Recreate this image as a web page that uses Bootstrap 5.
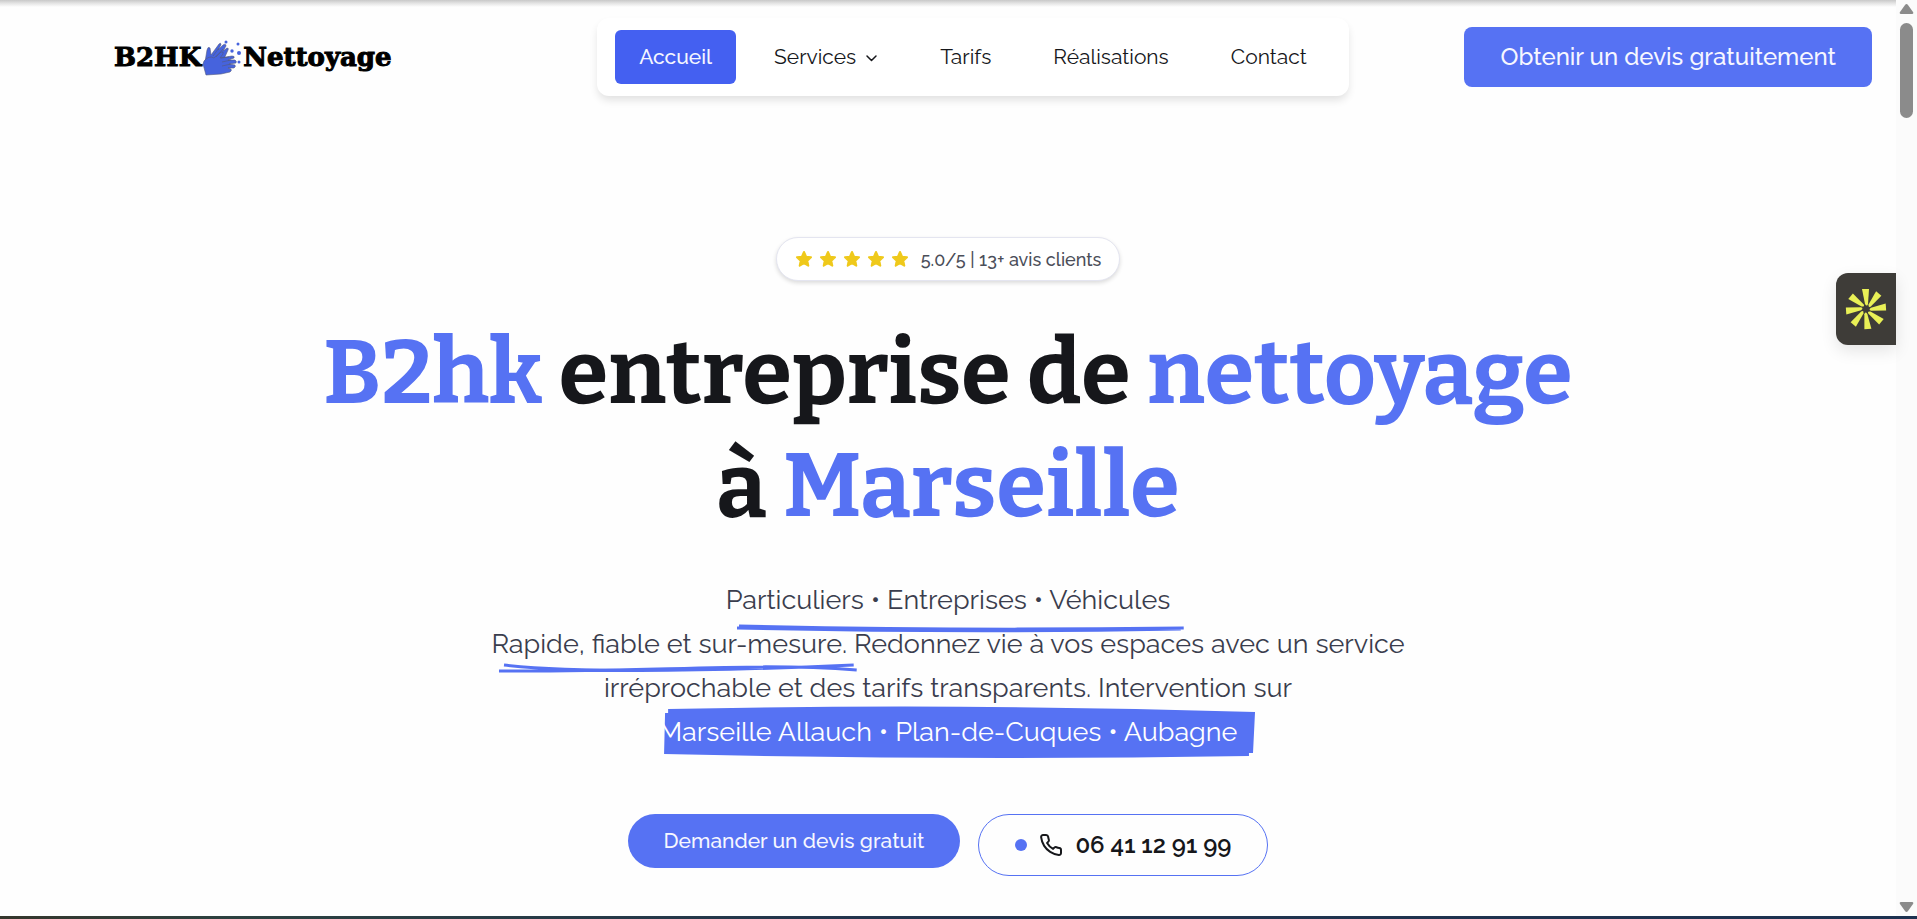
<!DOCTYPE html>
<html lang="fr">
<head>
<meta charset="utf-8">
<meta name="viewport" content="width=device-width, initial-scale=1">
<title>B2HK Nettoyage</title>
<link href="https://cdn.jsdelivr.net/npm/bootstrap@5.3.0/dist/css/bootstrap.min.css" rel="stylesheet">
<style>
:root{--blue:#5672f3;--ink:#16171b}
body{font-family:"Raleway","Lato",sans-serif;color:var(--ink);background:#fefefe}
.page-top{background:linear-gradient(#c8c8c8,#e2e2e2 3px,#fefefe 7px)}
.site-header{padding:18px 24px 0}
.brand{padding:0 90px;font-family:"DejaVu Serif",serif;font-weight:700;font-size:26px;line-height:30px;color:#000;text-decoration:none;-webkit-text-stroke:1px #000}
.menu{padding:12px 18px;border-radius:12px;background:#fff;box-shadow:0 5px 8px -1px #0000001f;gap:14px}
.menu .nav-link{font-size:21px;line-height:30px;padding:12px 24px;color:var(--ink);border-radius:6px}
.menu .nav-link.active{background:#4460f1;color:#f4f6ff;font-weight:500}
.btn-quote{background:var(--blue);color:#f6f7ff;font-size:24px;line-height:36px;padding:12px 36px;border:0;border-radius:8px;font-weight:500}
.rating{margin-top:141px;height:44px;padding:0 18px;border:1px solid #e4e5f0;border-radius:22px;background:#fff;box-shadow:0 2px 4px #00000024;font-size:18px;font-weight:500;color:#4b4e59;gap:12px}
.headline{font-family:"Bitter","DejaVu Serif",serif;font-weight:700;font-size:90px;line-height:113px;margin:36px 0 0}
.accent{color:var(--blue)}
.pitch{font-size:27px;line-height:44px;font-weight:400;color:#3a3d4d;margin:35px 0 0}
.mark-line{position:relative;display:inline-block}
.mark-line svg{position:absolute;left:0;top:0;width:100%;height:100%;overflow:visible}
.mark-line span{position:relative}
.inked{color:#fff}
.actions{gap:18px;margin-top:60px}
.btn-main{background:var(--blue);color:#f6f7ff;font-size:21px;line-height:30px;padding:12px 36px;border:0;border-radius:30px;font-weight:500}
.btn-phone{border:1px solid var(--blue);border-radius:32px;font-size:24px;line-height:36px;font-weight:600;padding:12px 36px;gap:12px;color:var(--ink)}
.dot{width:12px;height:12px;border-radius:50%;background:var(--blue)}
.side-tab{position:absolute;right:0;top:273px;width:60px;height:72px;background:#3e3c38;border:0;border-radius:12px 0 0 12px;box-shadow:0 6px 16px #0000001a}
.rail{width:21px;background:#fbfbfb}
.thumb{width:13px;height:95px;border-radius:7px;background:#8b8b8b}
.strip{height:3px;background:linear-gradient(90deg,#35362c,#2c4140 12%,#22344d 45%,#1c3150)}
</style>
</head>
<body>
<div class="d-flex flex-column min-vh-100">
<div class="page-top d-flex flex-grow-1">
<main class="flex-grow-1 position-relative">
  <header class="site-header d-flex align-items-center justify-content-between">
    <a class="brand d-flex align-items-center" href="#"><span>B2HK</span>
      <svg width="42" height="40" viewBox="0 0 42 40" aria-hidden="true"><g fill="#4663dd" stroke="#53597e" stroke-width=".6" stroke-linejoin="round"><path d="M4 25 6 13Q7 9 9 11L10 18 18 7Q20 5 20 8L17 13 22 8Q25 6 25 9L22 14 26 11Q28 11 27 13L23 22 12 33 3 29Z"/><path d="M3 24Q8 18 13 21L20 15Q23 14 22 17L19 21 31 19Q34 19 33 21L27 23 34 23Q36 24 35 26L28 27 34 28Q35 30 33 31L27 31 30 32Q31 34 29 35L20 37 5 38 2 27Z"/></g><path d="m12 19 6-8M15 20l7-8M20 21l8-1M21 25l9-2M21 29l9-2" fill="none" stroke="#53597e" stroke-width=".6"/><g fill="#4663dd"><circle cx="25" cy="5" r="1.500"/><circle cx="37" cy="7" r="1.500"/><circle cx="31" cy="14" r="1.700"/><circle cx="38" cy="16" r="2"/><circle cx="38" cy="25" r="1.500"/></g></svg>
      <span>Nettoyage</span></a>
    <nav class="menu nav flex-nowrap">
      <a class="nav-link active" href="#">Accueil</a>
      <a class="nav-link d-flex align-items-center" href="#">Services <svg class="ms-2" width="14" height="14" viewBox="0 0 14 14" fill="none" stroke="#16171b" stroke-width="1.5" stroke-linecap="round" stroke-linejoin="round"><path d="m3 6 4.500 4.500L12 6"/></svg></a>
      <a class="nav-link" href="#">Tarifs</a>
      <a class="nav-link" href="#">Réalisations</a>
      <a class="nav-link" href="#">Contact</a>
    </nav>
    <button class="btn-quote">Obtenir un devis gratuitement</button>
  </header>
  <section class="d-flex flex-column align-items-center text-center">
    <div class="rating d-flex align-items-center">
      <svg width="114" height="18" viewBox="0 0 114 18" fill="#efc91b" stroke="#efc91b" stroke-width="2" stroke-linejoin="round" role="img" aria-label="5 étoiles"><defs><path id="st" d="m9 2 2.100 4.700 4.900.6-3.700 3.400 1 5L9 13.200 4.700 15.700l1-5L2 7.300l4.900-.6Z"/></defs><use href="#st"/><use href="#st" x="24"/><use href="#st" x="48"/><use href="#st" x="72"/><use href="#st" x="96"/></svg>
      <span>5.0/5 | 13+ avis clients</span>
    </div>
    <h1 class="headline"><span class="accent">B2hk</span> entreprise de <span class="accent">nettoyage</span><br>à <span class="accent">Marseille</span></h1>
    <p class="pitch"><span class="mark-line"><svg viewBox="0 0 444 44" preserveAspectRatio="none" fill="none" stroke="#5672f3" stroke-width="3"><path d="M13 48Q230 53 457 50M11 50Q230 55 454 51"/></svg><span>Particuliers • Entreprises • Véhicules</span></span><br>
    <span class="mark-line"><svg viewBox="0 0 356 44" preserveAspectRatio="none" fill="none" stroke="#5672f3" stroke-width="3"><path d="M13 43Q110 54 363 43M8 49C170 50 260 40 366 48"/></svg><span>Rapide, fiable et sur-mesure.</span></span> Redonnez vie à vos espaces avec un service<br>irréprochable et des tarifs transparents. Intervention sur<br>
    <span class="mark-line inked"><svg viewBox="0 0 572 44" preserveAspectRatio="none" fill="#5672f3"><path d="M9-1Q300-7 589 2L587 43H583V46Q290 51 5 44L6 3H9Z"/></svg><span>Marseille Allauch • Plan-de-Cuques • Aubagne</span></span></p>
    <div class="actions d-flex align-items-start">
      <button class="btn-main">Demander un devis gratuit</button>
      <a class="btn-phone btn d-flex align-items-center" href="tel:0641129199"><span class="dot"></span><svg width="24" height="24" viewBox="0 0 24 24" fill="none" stroke="#16171b" stroke-width="2" stroke-linejoin="round"><path d="M22 16.920v3a2 2 0 0 1-2.180 2 19.790 19.790 0 0 1-8.630-3.070 19.500 19.500 0 0 1-6-6A19.790 19.790 0 0 1 2.120 4.180 2 2 0 0 1 4.110 2h3a2 2 0 0 1 2 1.720c.13.960.36 1.900.7 2.810a2 2 0 0 1-.45 2.110L8.090 9.910a16 16 0 0 0 6 6l1.270-1.270a2 2 0 0 1 2.110-.45c.91.34 1.850.57 2.810.7A2 2 0 0 1 22 16.920Z"/></svg><span>06 41 12 91 99</span></a>
    </div>
  </section>
  <button class="side-tab d-flex align-items-center justify-content-center p-0" aria-label="Accessibilité"><svg width="42" height="42" viewBox="-21 -21 42 42" fill="#e9f056"><defs><path id="ray" d="M-4-20 3-20 2-5Q1-2-1-5Z"/></defs><use href="#ray"/><use href="#ray" transform="rotate(41)"/><use href="#ray" transform="rotate(86)"/><use href="#ray" transform="rotate(131)"/><use href="#ray" transform="rotate(176)"/><use href="#ray" transform="rotate(221)"/><use href="#ray" transform="rotate(266)"/><use href="#ray" transform="rotate(311)"/></svg></button>
</main>
<aside class="rail d-flex flex-column align-items-center pt-1 pb-1" aria-hidden="true">
  <svg width="15" height="11" viewBox="0 0 15 11" fill="#8b8b8b"><path d="M6 1Q7.500-1 9 1L14 8Q15 10 13 10H2Q0 10 1 8Z"/></svg>
  <div class="thumb mt-2"></div>
  <svg class="mt-auto" width="15" height="11" viewBox="0 0 15 11" fill="#8b8b8b"><path d="M6 10Q7.500 12 9 10L14 3Q15 1 13 1H2Q0 1 1 3Z"/></svg>
</aside>
</div>
<div class="strip"></div>
</div>
<script src="https://cdn.jsdelivr.net/npm/bootstrap@5.3.0/dist/js/bootstrap.bundle.min.js"></script>
</body>
</html>
